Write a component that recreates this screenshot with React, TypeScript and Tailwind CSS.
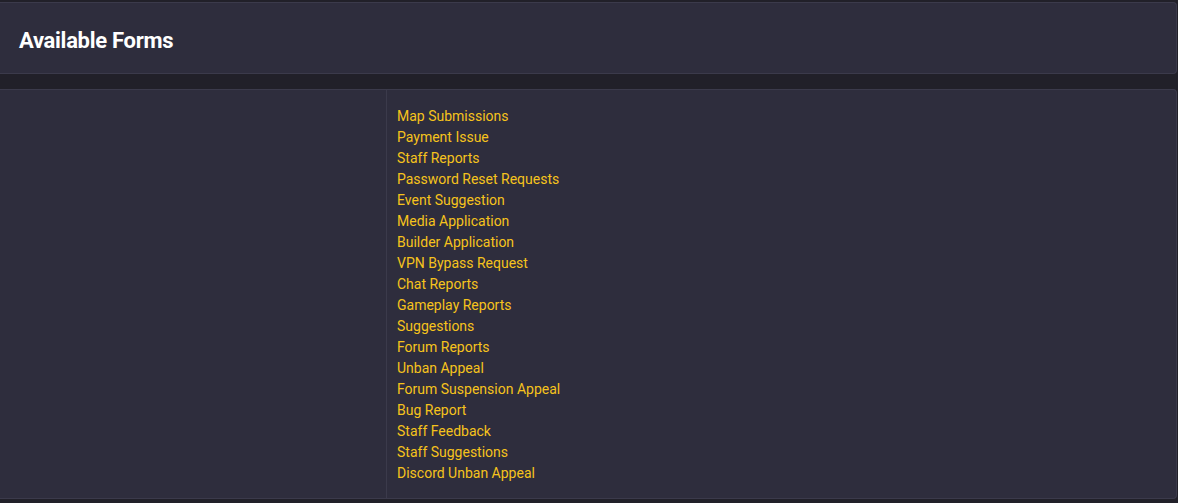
import React from "react";

const forms = [
  "Map Submissions",
  "Payment Issue",
  "Staff Reports",
  "Password Reset Requests",
  "Event Suggestion",
  "Media Application",
  "Builder Application",
  "VPN Bypass Request",
  "Chat Reports",
  "Gameplay Reports",
  "Suggestions",
  "Forum Reports",
  "Unban Appeal",
  "Forum Suspension Appeal",
  "Bug Report",
  "Staff Feedback",
  "Staff Suggestions",
  "Discord Unban Appeal",
];

export default function App() {
  return (
    <div
      className="min-h-[503px] bg-[#212029] pt-[2px] pb-[4px] pr-px"
      style={{ fontFamily: "Roboto, 'Liberation Sans', sans-serif" }}
    >
      {/* Header card */}
      <div className="h-[72px] bg-[#2e2d3d] border border-l-0 border-[#3b3a4b] rounded-r-[4px] flex items-center pl-[19px]">
        <h1 className="text-[22px] font-bold text-white tracking-[-0.3px] pt-[4px]">Available Forms</h1>
      </div>

      {/* Forms card */}
      <div className="mt-[15px] h-[410px] bg-[#2e2d3d] border border-l-0 border-[#3b3a4b] rounded-r-[4px] flex">
        <div className="w-[387px] border-r border-[#3b3a4b]" />
        <ul className="pl-[10px] pt-[16px] flex flex-col">
          {forms.map((f) => (
            <li key={f} className="leading-[21px] text-[14px]">
              <a href="#" className="text-[#f6c31c] hover:underline">
                {f}
              </a>
            </li>
          ))}
        </ul>
      </div>
    </div>
  );
}
